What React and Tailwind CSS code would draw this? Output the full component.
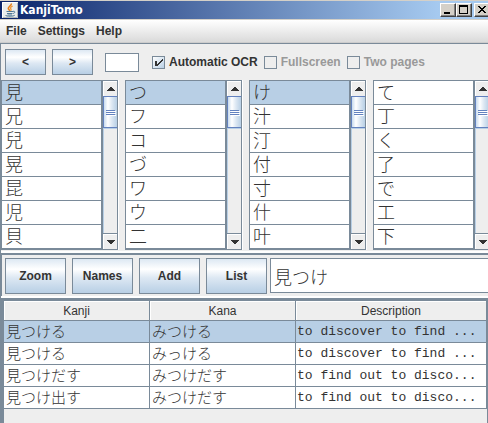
import React from "react";

const lists = [
  { name: "Candidates 1", items: ["見", "兄", "兒", "晃", "昆", "児", "貝"], selected: true },
  { name: "Candidates 2", items: ["つ", "フ", "コ", "づ", "ワ", "ウ", "二"], selected: true },
  { name: "Candidates 3", items: ["け", "汁", "汀", "付", "寸", "什", "叶"], selected: true },
  { name: "Candidates 4", items: ["て", "丁", "く", "了", "で", "工", "下"], selected: false },
];

const rows = [
  ["見つける", "みつける", "to discover to find ..."],
  ["見つける", "みっける", "to discover to find ..."],
  ["見つけだす", "みつけだす", "to find out to disco..."],
  ["見つけ出す", "みつけだす", "to find out to disco..."],
];

const metal =
  "border border-[#7a8a99] bg-[linear-gradient(#dde8f3_0%,#ffffff_30%,#dde8f3_55%,#b8cfe5_100%)] font-bold text-[#333]";

function JavaIcon() {
  return (
    <svg width="16" height="16" viewBox="0 0 16 16" aria-hidden="true" className="shrink-0">
      <rect width="16" height="16" fill="#e9ecec" />
      <path d="M.5 15.500V.5H15.500" fill="none" stroke="#fff" />
      <path d="M15.500 1V15.500H1" fill="none" stroke="#b5b9ba" />
      <path d="M9.300 1.500C10 3.500 6 4.500 6.300 6.500C6.500 7.500 7.600 8 7.800 9" fill="none" stroke="#e8801a" strokeWidth="1.600" />
      <path d="M10.700 4C8.500 5 8 6 8.900 7C9.400 7.700 9 8.400 8.600 8.900" fill="none" stroke="#f09a3a" strokeWidth="1.300" />
      <path d="M4.500 9.500H11M5 11.500H10.500M5.500 13H10" fill="none" stroke="#4f7896" />
      <path d="M11 9.300C13.500 8.800 13.300 11 11.200 11.500" fill="none" stroke="#4f7896" />
      <path d="M3.500 13C3 14.500 11.500 14.700 12.800 13.200" fill="none" stroke="#4f7896" />
    </svg>
  );
}

function WindowButton({ label, className = "", children }) {
  return (
    <button
      aria-label={label}
      className={
        "h-[14px] w-4 shrink-0 border border-t-white border-l-white border-r-[#404040] border-b-[#404040] bg-[#d4d0c8] shadow-[inset_-1px_-1px_0_#808080] " +
        className
      }
    >
      <svg width="14" height="12" viewBox="0 0 14 12" shapeRendering="crispEdges" aria-hidden="true" className="block">
        {children}
      </svg>
    </button>
  );
}

function ArrowButton({ label, down }) {
  return (
    <button
      aria-label={label}
      className={
        "flex h-[15px] shrink-0 items-center justify-center border-t border-l border-white bg-[#eee] " +
        (down ? "shadow-[0_-1px_0_#7a8a99]" : "")
      }
    >
      <svg width="8" height="4" viewBox="0 0 8 4" fill="#333" shapeRendering="crispEdges" aria-hidden="true">
        <path d={down ? "M0 0H8V1H7V2H6V3H5V4H3V3H2V2H1V1H0Z" : "M0 4H8V3H7V2H6V1H5V0H3V1H2V2H1V3H0Z"} />
      </svg>
    </button>
  );
}

function ScrollBar() {
  return (
    <div className="flex w-[15px] flex-col border-r border-[#7a8a99] bg-[#eee]">
      <ArrowButton label="Scroll up" />
      <div className="flex flex-1 flex-col border-l border-[#b8cfe5]">
        <div className="-ml-px flex h-8 flex-col items-center justify-center gap-px border border-r-0 border-[#6382bf] bg-[linear-gradient(90deg,#c8dbee_0%,#ffffff_30%,#dde8f3_60%,#b8cfe5_100%)]">
          <span className="h-px w-[9px] bg-[#6382bf] shadow-[1px_1px_0_#fff]" />
          <span className="h-px w-[9px] bg-[#6382bf] shadow-[1px_1px_0_#fff]" />
          <span className="h-px w-[9px] bg-[#6382bf] shadow-[1px_1px_0_#fff]" />
        </div>
        <div className="h-px bg-[#b8cfe5]" />
      </div>
      <ArrowButton label="Scroll down" down />
    </div>
  );
}

function CandidateList({ name, items, selected }) {
  return (
    <div className="flex w-[118px] shrink-0 border-r border-white">
      <div className="flex flex-1 border-t border-b border-l border-[#7a8a99]">
        <ul aria-label={name} className="flex-1 border-r-2 border-[#7a8a99]">
          {items.map((item, i) => (
            <li key={item} className="border-b border-[#7a8a99]">
              <button
                className={
                  "block h-[23px] w-full overflow-hidden pl-[3px] text-left text-[18px] leading-[25px] font-light " +
                  (selected && i === 0 ? "bg-[#b8cfe5]" : "bg-white")
                }
              >
                {item}
              </button>
            </li>
          ))}
        </ul>
        <ScrollBar />
      </div>
    </div>
  );
}

function Check({ label, ...props }) {
  return (
    <label className="flex items-center gap-1 font-bold text-[#333] has-disabled:text-[#999]">
      <span className="grid size-[13px] shrink-0">
        <input
          type="checkbox"
          className="peer col-start-1 row-start-1 size-[13px] appearance-none border border-[#7a8a99] bg-[#eee] checked:bg-[linear-gradient(135deg,#ffffff,#b8cfe5)]"
          {...props}
        />
        <svg
          viewBox="0 0 13 13"
          fill="#333"
          shapeRendering="crispEdges"
          aria-hidden="true"
          className="pointer-events-none col-start-1 row-start-1 hidden size-[13px] peer-checked:block"
        >
          <path d="M3 5H5V8H6V7H7V6H8V5H9V4H10V3H11V5H10V6H9V7H8V8H7V9H6V10H3Z" />
        </svg>
      </span>
      {label}
    </label>
  );
}

export default function App() {
  return (
    <div className="min-h-screen overflow-hidden bg-[#eee] font-['Liberation_Sans','Noto_Sans_CJK_JP',sans-serif] text-[12px] leading-4 text-[#333]">
      <header className="flex h-5 items-center justify-between border-t border-b border-[#d4d0c8] bg-[linear-gradient(90deg,#0a246a,#a6caf0_90%)] pl-[2px]">
        <h1 className="flex items-center gap-[2px] font-['DejaVu_Sans_Condensed','DejaVu_Sans',sans-serif] text-[12px] font-bold text-white">
          <JavaIcon />
          KanjiTomo
        </h1>
        <div className="-mr-[2px] flex">
          <WindowButton label="Minimize">
            <path d="M3 8h6v2H3z" fill="#000" />
          </WindowButton>
          <WindowButton label="Maximize">
            <path d="M2 1h9v9H2zM3 3v6h7V3z" fill="#000" fillRule="evenodd" />
          </WindowButton>
          <WindowButton label="Close" className="ml-[2px]">
            <path d="M3 2h2v1h1v1h2V3h1V2h2v1h-1v1H9v1H8v1h1v1h1v1h1v1H9V8H8V7H6v1H5v1H3V8h1V7h1V6h1V5H5V4H4V3H3z" fill="#000" />
          </WindowButton>
        </div>
      </header>

      <nav className="flex h-[23px] items-center gap-[11px] border-b border-[#ccc] bg-[linear-gradient(#ffffff,#dadada)] pl-[6px] font-bold">
        <button>File</button>
        <button>Settings</button>
        <button>Help</button>
      </nav>

      <main className="border-l border-[#7a8a99]">
        <div className="flex h-[37px] items-center border-t border-[#7a8a99] pl-1 whitespace-nowrap">
          <button className={"mr-[6px] h-[26px] w-[41px] shrink-0 " + metal}>&lt;</button>
          <button className={"mr-3 h-[26px] w-[41px] shrink-0 " + metal}>&gt;</button>
          <input
            aria-label="Page"
            className="mr-[13px] h-[19px] w-[34px] shrink-0 border border-[#7a8a99] bg-white px-1"
          />
          <div className="flex gap-[6px]">
            <Check label="Automatic OCR" defaultChecked />
            <Check label="Fullscreen" disabled />
            <Check label="Two pages" disabled />
          </div>
        </div>

        <section className="flex gap-[6px] pb-px">
          {lists.map((list) => (
            <CandidateList key={list.name} {...list} />
          ))}
        </section>

        <form
          onSubmit={(e) => e.preventDefault()}
          className="flex border-t-2 border-b-2 border-white"
        >
          <div className="flex min-w-0 flex-1 border-t-2 border-l border-[#7a8a99] pt-[3px] pb-[2px] pl-[3px]">
            <div className="flex shrink-0 gap-[6px]">
              {["Zoom", "Names", "Add", "List"].map((label) => (
                <button key={label} type="button" className={"h-9 w-[61px] " + metal}>
                  {label}
                </button>
              ))}
            </div>
            <input
              aria-label="Search text"
              defaultValue="見つけ"
              className="ml-[3px] h-[35px] min-w-0 flex-1 border border-r-0 border-[#7a8a99] bg-white px-[3px] text-[18px] font-light"
            />
          </div>
        </form>

        <div className="border-t-[3px] border-r border-l-[3px] border-[#7a8a99]">
          <table className="w-full table-fixed border-separate border-spacing-0">
            <colgroup>
              <col className="w-[146px]" />
              <col className="w-[146px]" />
              <col />
            </colgroup>
            <thead>
              <tr>
                {["Kanji", "Kana", "Description"].map((h) => (
                  <th
                    key={h}
                    className="h-5 border-r border-b border-[#7a8a99] p-0 font-normal shadow-[inset_1px_1px_0_#fff]"
                  >
                    {h}
                  </th>
                ))}
              </tr>
            </thead>
            <tbody>
              {rows.map(([kanji, kana, text], i) => (
                <tr key={i} className={i === 0 ? "bg-[#b8cfe5]" : "bg-white"}>
                  <td className="h-[22px] border-r border-b border-[#7a8a99] p-0 pl-[2px] text-[15px] leading-[21px] font-light">
                    {kanji}
                  </td>
                  <td className="h-[22px] border-r border-b border-[#7a8a99] p-0 pl-[2px] text-[15px] leading-[21px] font-light">
                    {kana}
                  </td>
                  <td className="h-[22px] overflow-hidden border-r border-b border-[#7a8a99] p-0 pl-px font-['Liberation_Mono',monospace] text-[13px] leading-[21px] whitespace-nowrap">
                    {text}
                  </td>
                </tr>
              ))}
            </tbody>
          </table>
          <div className="h-4" />
        </div>
      </main>
    </div>
  );
}
